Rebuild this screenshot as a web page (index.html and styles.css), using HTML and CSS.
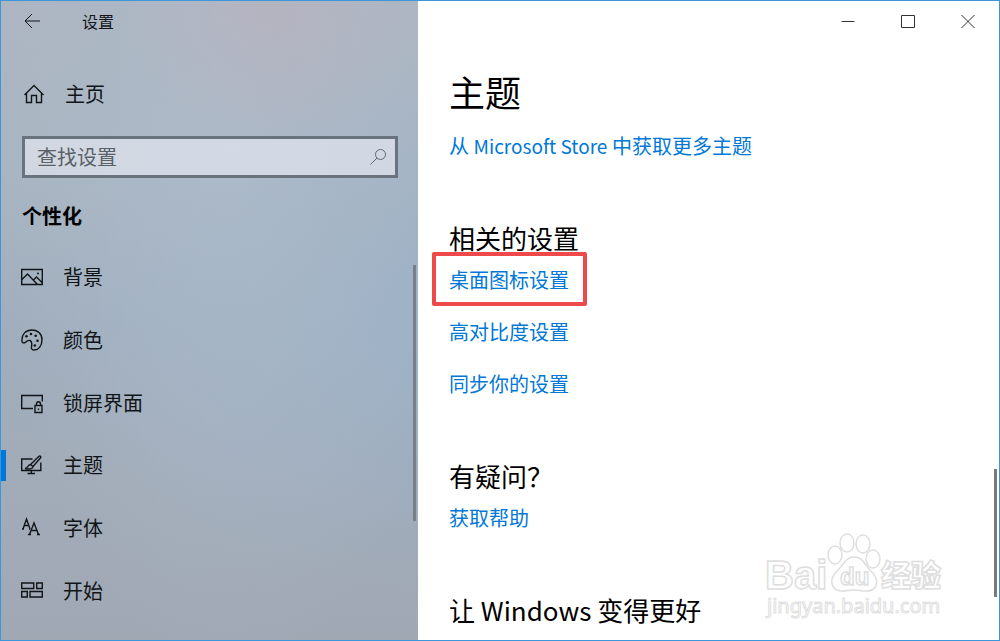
FILE: index.html
```html
<!DOCTYPE html>
<html lang="zh-CN">
<head>
<meta charset="utf-8">
<meta name="viewport" content="width=device-width, initial-scale=1">
<title>设置</title>
<link rel="stylesheet" href="styles.css">
</head>
<body>
<div class="window">
  <aside class="sidebar">
    <header class="titlebar">
      <button class="back" type="button" aria-label="返回">
        <svg width="18" height="18" viewBox="0 0 18 18"><path d="M9 2L2 9l7 7M2 9h15"/></svg>
      </button>
      <span class="app-name">设置</span>
    </header>
    <a class="home" href="#home">
      <svg class="icon" width="22" height="22" viewBox="0 0 22 22"><path d="M1.500 12L11 2.500L20.500 12M3.500 10.500V19.500H8.500V12.500H13.500V19.500H18.500V10.500"/></svg>
      <span>主页</span>
    </a>
    <form class="search">
      <input class="search-input" type="search" placeholder="查找设置" aria-label="查找设置">
      <button class="search-button" type="submit" aria-label="搜索">
        <svg width="18" height="18" viewBox="0 0 18 18"><circle cx="11.500" cy="6.500" r="5"/><path d="M8 10L1.500 16.500"/></svg>
      </button>
    </form>
    <h2 class="section">个性化</h2>
    <nav class="menu">
      <a class="item" href="#background">
        <svg class="icon" width="22" height="22" viewBox="0 0 22 22"><path d="M.7 3.500H21.300V18.500H.7zM1 13.500L6.500 8l10 10.500M12.500 14l3-3 5.500 5.500"/><circle class="solid" cx="17" cy="7.500" r="1"/></svg>
        <span>背景</span>
      </a>
      <a class="item" href="#colors">
        <svg class="icon" width="22" height="22" viewBox="0 0 22 22"><path d="M1 12C.5 5 5 1 11 1c6 0 10 4 10 9.800 0 6-3.500 10.200-7.500 10.200-2.500 0-3.500-1.300-3-3.500.5-2.500.8-5-1.500-6-2.500-1-3.500 1.800-5.500 2.300C2 14.200 1 13.500 1 12z"/><g class="solid"><circle cx="5.500" cy="7.300" r="1.300"/><circle cx="10" cy="5" r="1.300"/><circle cx="14.700" cy="6.800" r="1.300"/><circle cx="16.500" cy="11.800" r="1.300"/><circle cx="13.800" cy="16.500" r="1.300"/></g></svg>
        <span>颜色</span>
      </a>
      <a class="item" href="#lockscreen">
        <svg class="icon" width="22" height="22" viewBox="0 0 22 22"><path d="M12 16.500H.7V3.500H21.300V9.500M14 13.500h7v7h-7zM15.500 13.500V12c0-3 4-3 4 0v1.500M17.500 16.500v1.500"/></svg>
        <span>锁屏界面</span>
      </a>
      <a class="item active" href="#themes" aria-current="page">
        <svg class="icon" width="22" height="22" viewBox="0 0 22 22"><path d="M11.500 5H.7v11.500h19.100V8.500M10.300 16.500v3M6.500 19.500h7.500M9.500 10.500l8.500-8.200c1-1 2.500.3 1.600 1.500L12 12.500zM9.500 10.500l2.500 2c0 2-2.500 3-8 2 3-.2 2.500-3.500 5.500-4z"/></svg>
        <span>主题</span>
      </a>
      <a class="item" href="#fonts">
        <svg class="icon" width="22" height="22" viewBox="0 0 22 22"><path d="M2 12L5.500 2l3.500 10M3.500 8.500h4M1 12h2M8 12h1M8.500 17.500L13 6l4.500 11.500M10.500 13.500h5M7 17.500h3M16 17.500h3"/></svg>
        <span>字体</span>
      </a>
      <a class="item" href="#start">
        <svg class="icon" width="22" height="22" viewBox="0 0 22 22"><path d="M.7 3h12v5.500H.7zM15.700 3h5.600v5.500h-5.600zM.7 11.500h5.600V17H.7zM9 11.500h12.300V17H9z"/></svg>
        <span>开始</span>
      </a>
    </nav>
    <div class="thumb side-thumb"></div>
  </aside>
  <main class="content">
    <header class="controls">
      <button class="control" type="button" aria-label="最小化"><svg width="14" height="14" viewBox="0 0 14 14"><path d="M.5 7.500h13"/></svg></button>
      <button class="control" type="button" aria-label="最大化"><svg width="14" height="14" viewBox="0 0 14 14"><path d="M.5 1.500h13v12H.5z"/></svg></button>
      <button class="control" type="button" aria-label="关闭"><svg width="14" height="14" viewBox="0 0 14 14"><path d="M.5 1l13 13M13.500 1L.5 14"/></svg></button>
    </header>
    <section class="group lead">
      <h1 class="title">主题</h1>
      <a class="link" href="#store">从 <span class="latin">Microsoft Store</span> 中获取更多主题</a>
    </section>
    <section class="group">
      <h2 class="heading">相关的设置</h2>
      <div class="links">
        <a class="link marked" href="#desktop-icons">桌面图标设置</a>
        <a class="link" href="#contrast">高对比度设置</a>
        <a class="link" href="#sync">同步你的设置</a>
      </div>
    </section>
    <section class="group">
      <h2 class="heading">有疑问？</h2>
      <a class="link" href="#help">获取帮助</a>
    </section>
    <section class="group">
      <h2 class="heading">让 Windows 变得更好</h2>
    </section>
    <div class="thumb main-thumb"></div>
    <svg class="watermark" width="190" height="94" viewBox="0 0 190 94">
      <text class="brand" x="4" y="57">Bai</text>
      <g class="paw">
        <ellipse cx="74" cy="23" rx="7" ry="9"/>
        <ellipse cx="86" cy="11" rx="7" ry="9"/>
        <ellipse cx="102" cy="12" rx="7" ry="9"/>
        <ellipse cx="112" cy="27" rx="7" ry="9"/>
        <path d="M93 25c9 0 10 7 16 13 11 10 7 21-3 21-6 0-8-1-13-1s-7 1-12 1c-10 0-15-11-4-21 6-6 8-13 16-13z"/>
      </g>
      <text class="du" x="79" y="53">du</text>
      <text class="cn" x="120" y="54">经验</text>
      <text class="site" x="6" y="81">jingyan.baidu.com</text>
    </svg>
  </main>
</div>
</body>
</html>
```
FILE: styles.css
```css
* { box-sizing: border-box; }

body {
  margin: 0;
  font-family: "Noto Sans CJK SC", sans-serif;
  font-size: 20px;
  line-height: 28px;
  color: #000;
  background: #fff;
}

button { padding: 0; border: 0; background: none; color: inherit; font: inherit; }
a { text-decoration: none; color: inherit; }
h1, h2 { margin: 0; font-weight: 400; }
svg { display: block; fill: none; stroke: currentColor; }

.window {
  display: flex;
  min-height: 100vh;
  border: 1px solid #3c96dc;
}

.sidebar {
  position: relative;
  display: flex;
  flex-direction: column;
  flex: 0 0 417px;
  padding-bottom: 18px;
  color: #111518;
  background:
    radial-gradient(circle at 270px 10px, rgba(184, 178, 190, .7), transparent 150px),
    radial-gradient(ellipse at 55% 22%, rgba(174, 188, 203, .7), transparent 240px),
    radial-gradient(ellipse at 100% 50%, rgba(156, 177, 199, .9), transparent 360px),
    linear-gradient(#adb5c1, #a9b5c2 25%, #a0aebd 50%, #a2abb8 75%, #a0a8b4);
}

.titlebar { display: flex; align-items: center; height: 40px; padding-left: 22px; gap: 41px; }
.back { display: flex; }
.app-name { font-size: 16px; line-height: 24px; }

.home { display: flex; align-items: center; gap: 20px; margin-top: 39px; padding-left: 22px; }
.icon { flex: none; stroke-width: 1.4; }
.solid { fill: currentColor; stroke: none; }

.search {
  display: flex;
  align-items: center;
  height: 42px;
  margin: 28px 20px 0 21px;
  border: 3px solid #69737e;
  background: rgba(236, 239, 246, .6);
  color: #606870;
}
.search-input {
  flex: 1;
  min-width: 0;
  padding: 0 12px;
  border: 0;
  outline: 0;
  background: none;
  font: inherit;
  color: #111518;
}
.search-input::placeholder { color: #5a6168; opacity: 1; }
.search-button { display: flex; padding-right: 8px; }

.section { margin: 24px 0 16px 21px; font-size: 20px; font-weight: 700; color: #000; }

.menu { display: flex; flex: 1; flex-direction: column; }
.item { position: relative; display: flex; flex: 1; align-items: center; gap: 20px; padding-left: 20px; }
.active::before {
  content: "";
  position: absolute;
  left: 0;
  width: 5px;
  height: 31px;
  background: #0078d7;
}

.thumb { position: absolute; width: 3px; background: #7a7a7a; }
.side-thumb { right: 2px; top: 41.300%; height: 40%; background: #77808a; }
.main-thumb { right: 2px; bottom: 43px; height: 20%; }

.content { position: relative; flex: 1; min-width: 0; padding-left: 31px; }
.controls { display: flex; justify-content: flex-end; padding-right: 1px; }
.control { display: flex; align-items: center; justify-content: center; width: 60px; height: 40px; color: #333; }

.group { display: flex; flex-direction: column; align-items: flex-start; gap: 10px; margin-top: 60px; }
.lead { gap: 17px; margin-top: 26px; }
.title { font-size: 36px; line-height: 48px; }
.heading { font-size: 26px; line-height: 36px; }
.links { display: flex; flex-direction: column; align-items: flex-start; gap: 24px; }
.link { color: #0078d7; }
.latin { font-size: 19px; }
.marked { position: relative; }
.marked::after {
  content: "";
  position: absolute;
  inset: -14px -18px -12px -17px;
  border: 4px solid #ef4a4b;
  border-radius: 2px;
}

.watermark {
  position: absolute;
  right: 48px;
  bottom: 14px;
  fill: #fff;
  stroke: #dedede;
  stroke-width: 1.5;
  pointer-events: none;
}
.brand { font: 700 40px "Liberation Sans", sans-serif; }
.du { font: 700 24px "Liberation Sans", sans-serif; }
.cn { font: 900 30px "Noto Sans CJK SC", sans-serif; }
.site { font: 400 20px "Noto Sans", sans-serif; stroke-width: 1; }
```
